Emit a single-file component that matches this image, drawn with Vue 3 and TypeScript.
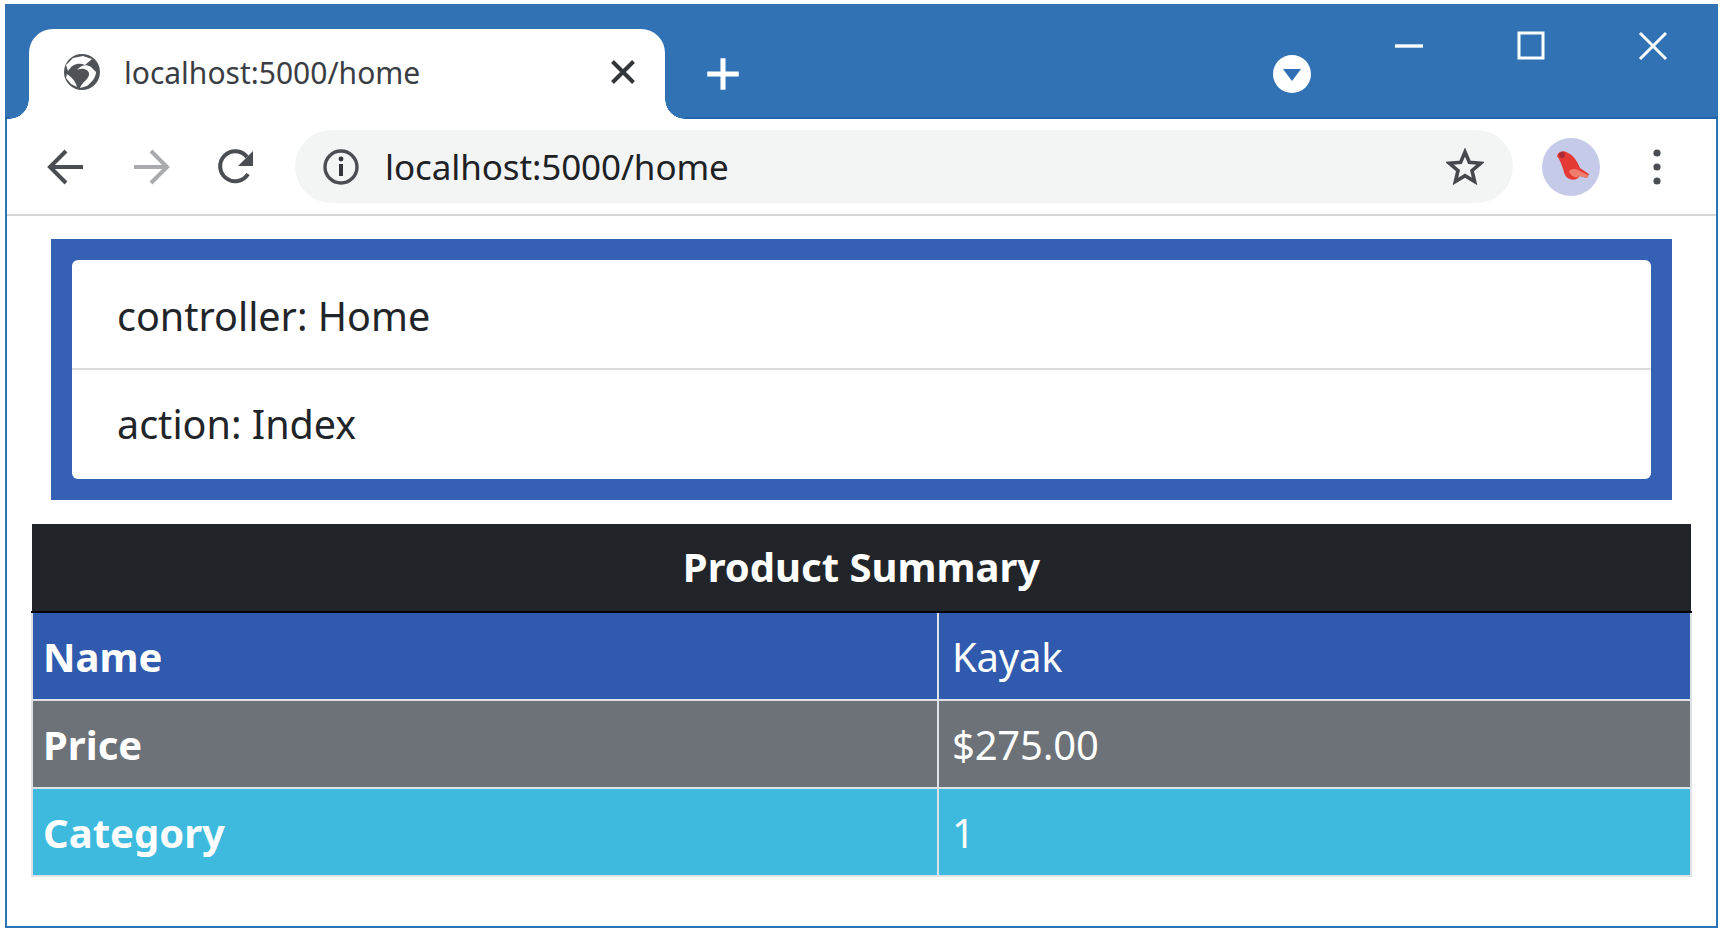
<template>
  <div class="page">
    <div class="window">
      <div class="titlebar">
        <div class="tab">
          <svg class="globe" viewBox="0 0 38 38" width="38" height="38">
            <circle cx="19" cy="19" r="18" fill="#4f5358"/>
            <path d="M5 18C9 11 16 9 22 12L29 6L20 3L10 5L3 12ZM14 17C20 14 27 17 26 22C25 27 19 29 17 35L24 33C29 29 33 24 33 19L28 14C23 11 18 12 14 17ZM4 21C8 24 12 27 14 34L8 31L3 25Z" fill="#fff"/>
          </svg>
          <span class="tab-title">localhost:5000/home</span>
          <svg class="tab-close" viewBox="0 0 24 24" width="28" height="28">
            <path d="M3 3 21 21M21 3 3 21" stroke="#33373b" stroke-width="3.400" fill="none"/>
          </svg>
        </div>
        <svg class="new-tab" viewBox="0 0 32 32" width="36" height="36">
          <path d="M16 2V30M2 16H30" stroke="#fff" stroke-width="4.500" fill="none"/>
        </svg>
        <div class="profile-drop">
          <svg viewBox="0 0 40 40" width="40" height="40">
            <circle cx="20" cy="20" r="19" fill="#fff"/>
            <path d="M11 15H29L20 27Z" fill="#2f6eb4"/>
          </svg>
        </div>
        <div class="win-controls">
          <svg viewBox="0 0 30 30" width="30" height="30"><path d="M1 15H29" stroke="#fff" stroke-width="3.400" fill="none"/></svg>
          <svg viewBox="0 0 30 30" width="30" height="30"><rect x="3" y="2" width="24" height="25" stroke="#fff" stroke-width="3" fill="none"/></svg>
          <svg viewBox="0 0 30 30" width="30" height="30"><path d="M2 2 28 28M28 2 2 28" stroke="#fff" stroke-width="3" fill="none"/></svg>
        </div>
      </div>

      <div class="toolbar">
        <svg class="nav" viewBox="0 0 40 40" width="40" height="40">
          <path d="M37 20H5M20 4 4 20 20 36" stroke="#4a4e53" stroke-width="4" fill="none"/>
        </svg>
        <svg class="nav" viewBox="0 0 40 40" width="40" height="40">
          <path d="M3 20H35M20 4 36 20 20 36" stroke="#a9abae" stroke-width="4" fill="none"/>
        </svg>
        <svg class="nav" viewBox="0 0 40 40" width="40" height="40">
          <path d="M32 27A15 15 0 1 1 31 10" stroke="#4a4e53" stroke-width="4" fill="none"/>
          <path d="M37 4V19H22Z" fill="#4a4e53"/>
        </svg>
        <div class="omnibox">
          <svg class="site-info" viewBox="0 0 38 38" width="38" height="38">
            <circle cx="19" cy="19" r="16" stroke="#4a4e53" stroke-width="3.400" fill="none"/>
            <path d="M19 16V28" stroke="#33373b" stroke-width="4" fill="none"/>
            <circle cx="19" cy="11" r="2.400" fill="#33373b"/>
          </svg>
          <span class="url">localhost:5000/home</span>
          <svg class="star" viewBox="0 0 38 38" width="38" height="38">
            <path d="M19 4 23.400 14.400 34.500 15.300 26 22.600 28.600 33.500 19 27.700 9.400 33.500 12 22.600 3.500 15.300 14.600 14.400Z" stroke="#45494e" stroke-width="3.600" fill="none"/>
          </svg>
        </div>
        <div class="avatar">
          <svg viewBox="0 0 58 58" width="58" height="58">
            <circle cx="29" cy="29" r="29" fill="#c5cae9"/>
            <path d="M15 18C16 13 22 12 26 15C31 17 36 24 38 30L47 36L45 40L38 38C35 43 26 43 23 37C21 31 19 23 15 18Z" fill="#e53935"/>
            <path d="M27 33C31 30 35 31 38 33L46 37L45 40L38 38C35 41 29 39 27 33Z" fill="#ef7e6c"/>
            <circle cx="20" cy="17" r="3" fill="#a82c35"/>
          </svg>
        </div>
        <svg class="dots" viewBox="0 0 12 40" width="12" height="40">
          <circle cx="6" cy="6" r="3.600" fill="#4a4e53"/>
          <circle cx="6" cy="20" r="3.600" fill="#4a4e53"/>
          <circle cx="6" cy="34" r="3.600" fill="#4a4e53"/>
        </svg>
      </div>

      <div class="content">
        <div class="route-panel">
          <ul class="route-list">
            <li v-for="entry in routeData" :key="entry.key">{{ entry.key }}: {{ entry.value }}</li>
          </ul>
        </div>

        <table class="summary">
          <colgroup>
            <col class="label-col">
            <col>
          </colgroup>
          <thead>
            <tr><th colspan="2">Product Summary</th></tr>
          </thead>
          <tbody>
            <tr v-for="row in rows" :key="row.label" :class="row.tone">
              <th>{{ row.label }}</th>
              <td>{{ row.value }}</td>
            </tr>
          </tbody>
        </table>
      </div>
    </div>
  </div>
</template>

<script setup lang="ts">
const routeData = [
  { key: 'controller', value: 'Home' },
  { key: 'action', value: 'Index' }
];

const rows = [
  { label: 'Name', value: 'Kayak', tone: 'row-primary' },
  { label: 'Price', value: '$275.00', tone: 'row-secondary' },
  { label: 'Category', value: '1', tone: 'row-info' }
];
</script>

<style>
html,
body {
  margin: 0;
  background: #fff;
}
</style>

<style scoped>
.page {
  width: 1725px;
  height: 935px;
  padding: 4px 7px 7px 5px;
  box-sizing: border-box;
  font-family: "Noto Sans", "Open Sans", sans-serif;
}
.window {
  height: 100%;
  box-sizing: border-box;
  border: 2px solid #2a74b8;
  border-top: none;
  display: flex;
  flex-direction: column;
  background: #fff;
}
.titlebar {
  height: 115px;
  flex: none;
  background: #3172b5;
  border-bottom: 2px solid #1f66ad;
  box-sizing: border-box;
  display: flex;
  align-items: flex-end;
  padding-left: 24px;
  position: relative;
  margin: 0 -2px;
}
.tab {
  width: 636px;
  height: 90px;
  margin-bottom: -2px;
  background: #fff;
  border-radius: 24px 24px 0 0;
  display: flex;
  align-items: center;
  box-sizing: border-box;
  padding: 0 28px 4px 34px;
  position: relative;
}
/* the concave corners at the foot of the active tab */
.tab::before,
.tab::after {
  content: "";
  position: absolute;
  bottom: 0;
  width: 20px;
  height: 20px;
  background: radial-gradient(circle at 100% 0, #3172b5 19.500px, #fff 20px);
}
.tab::before {
  left: -20px;
  background: radial-gradient(circle at 0 0, #3172b5 19.500px, #fff 20px);
}
.tab::after {
  right: -20px;
}
.globe {
  flex: none;
}
.tab-title {
  margin-left: 23px;
  flex: 1;
  font-size: 30px;
  color: #3a3e44;
}
.tab-close {
  flex: none;
}
.new-tab {
  flex: none;
  align-self: flex-end;
  margin: 0 0 25px 40px;
}
.profile-drop {
  position: absolute;
  left: 1267px;
  top: 50px;
  width: 40px;
  height: 40px;
}
.win-controls {
  position: absolute;
  top: 27px;
  right: 50px;
  display: flex;
  gap: 92px;
}
.toolbar {
  height: 97px;
  flex: none;
  box-sizing: border-box;
  border-bottom: 2px solid #d6d6d6;
  display: flex;
  align-items: center;
  padding: 0 26px 0 39px;
}
.nav {
  flex: none;
  margin-right: 45px;
}
.omnibox {
  flex: none;
  margin-left: -6px;
  width: 1218px;
  height: 73px;
  border-radius: 37px;
  background: #f3f5f5;
  display: flex;
  align-items: center;
  padding: 0 29px 0 27px;
  box-sizing: border-box;
}
.site-info {
  flex: none;
}
.url {
  margin-left: 25px;
  flex: 1;
  font-size: 35px;
  letter-spacing: -0.1px;
  color: #202124;
}
.star {
  flex: none;
}
.avatar {
  flex: none;
  margin-left: 29px;
  width: 58px;
  height: 58px;
}
.dots {
  flex: none;
  margin-left: 51px;
}
.content {
  flex: 1;
  padding: 23px 24px 0 24px;
}
.route-panel {
  margin: 0 20px;
  background: #3660b3;
  padding: 21px;
}
.route-list {
  list-style: none;
  margin: 0;
  padding: 0;
  background: #fff;
  border-radius: 6px;
}
.route-list li {
  height: 108px;
  box-sizing: border-box;
  padding: 4px 0 0 45px;
  display: flex;
  align-items: center;
  font-size: 39.500px;
  color: #212529;
}
.route-list li + li {
  height: 111px;
  padding: 0 0 2px 45px;
  border-top: 2px solid #dcdcdc;
}
.summary {
  width: 100%;
  margin-top: 24px;
  border-collapse: collapse;
  table-layout: fixed;
  color: #fff;
  font-size: 40px;
}
.label-col {
  width: 906px;
}
.summary thead th {
  height: 88px;
  background: #212529;
  border-bottom: 2px solid #000;
  text-align: center;
  font-weight: 700;
  padding: 0 0 2px;
  box-sizing: border-box;
}
.summary tbody th,
.summary tbody td {
  height: 88px;
  padding: 0 13px;
  text-align: left;
  border: 2px solid #dee2e6;
  box-sizing: border-box;
}
.summary tbody th {
  padding-left: 10px;
  font-weight: 700;
}
.summary tbody td {
  font-weight: 400;
  letter-spacing: -0.2px;
}
.row-primary {
  background: #2f5aae;
}
.row-secondary {
  background: #6c7278;
}
.row-info {
  background: #3dbadd;
}
</style>
